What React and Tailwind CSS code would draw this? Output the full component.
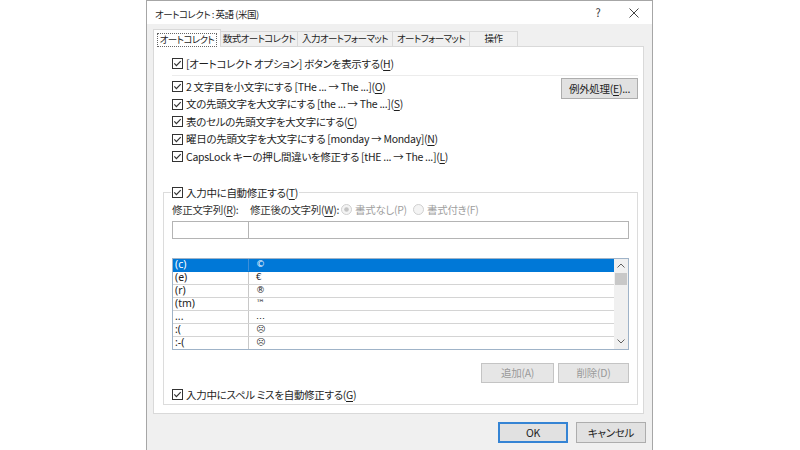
import React from "react";

const F = "font-['Noto_Sans_CJK_JP','Noto_Sans',sans-serif] [font-feature-settings:'palt']";

function Check({ checked = true }) {
  return (
    <svg width="11" height="11" viewBox="0 0 11 11" className="shrink-0">
      <rect x="0.5" y="0.5" width="10" height="10" fill="white" stroke="#333" />
      {checked && <path d="M2.3 5.4 L4.4 7.6 L8.7 3.1" fill="none" stroke="#333" strokeWidth="1.2" />}
    </svg>
  );
}

function Radio({ on }) {
  return (
    <svg width="11" height="11" viewBox="0 0 11 11" className="shrink-0">
      <circle cx="5.5" cy="5.5" r="5" fill="#f4f4f4" stroke="#cfcfcf" />
      {on && <circle cx="5.5" cy="5.5" r="2.3" fill="#c4c4c4" />}
    </svg>
  );
}

function Row({ children }) {
  return (
    <div className="h-[17.5px] flex items-center gap-[3px] whitespace-nowrap">
      <Check />
      <span>{children}</span>
    </div>
  );
}

const U = ({ children }) => <span className="underline underline-offset-2">{children}</span>;

const rows = [
  ["(c)", "©"],
  ["(e)", "€"],
  ["(r)", "®"],
  ["(tm)", "™"],
  ["...", "…"],
  [":(", "☹"],
  [":-(", "☹"],
];

const tabs = [
  { t: "オートコレクト", w: "w-[68px]", sel: true },
  { t: "数式オートコレクト", w: "w-[77px]" },
  { t: "入力オートフォーマット", w: "w-[95px]" },
  { t: "オートフォーマット", w: "w-[77px]" },
  { t: "操作", w: "w-[48px]" },
];

export default function App() {
  return (
    <div className={`w-[800px] h-[450px] bg-white overflow-hidden text-[10.5px] tracking-[-0.3px] text-[#1e1e1e] ${F}`}>
      <div className="ml-[146px] w-[507px] h-[452px] border border-[#a6a6a6] bg-[#f0f0f0] flex flex-col">
        {/* title bar */}
        <div className="h-[23px] bg-white flex items-center shrink-0">
          <span className="pl-[8px] pt-[3px] text-[9.5px] tracking-[-0.5px] whitespace-nowrap">オートコレクト : 英語 (米国)</span>
          <div className="ml-auto flex h-full">
            <div className="w-[36px] flex items-center justify-center text-[11px] text-[#333]">?</div>
            <div className="w-[36px] flex items-center justify-center">
              <svg width="10" height="10" viewBox="0 0 10 10">
                <path d="M0.5 0.5 L9.5 9.5 M9.5 0.5 L0.5 9.5" stroke="#444" strokeWidth="1" />
              </svg>
            </div>
          </div>
        </div>

        {/* tabs */}
        <div className="mt-[5px] ml-[6px] h-[18px] flex items-end relative z-10 shrink-0 text-[9.5px] tracking-[-0.6px]">
          {tabs.map((tb, i) =>
            tb.sel ? (
              <div key={i} className={`${tb.w} h-[18px] bg-white border border-b-0 border-[#d9d9d9] flex items-center justify-center px-[3px] pt-[2px]`}>
                <span className="border border-dotted border-[#666] w-full h-[14px] flex items-center justify-center leading-none whitespace-nowrap">{tb.t}</span>
              </div>
            ) : (
              <div key={i} className={`${tb.w} h-[15px] mb-[1px] border-t border-r border-[#d9d9d9] flex items-center justify-center leading-none whitespace-nowrap`}>
                {tb.t}
              </div>
            )
          )}
        </div>

        {/* panel */}
        <div className="-mt-[1px] ml-[6px] w-[491px] h-[368px] bg-white border border-[#d9d9d9] flex flex-col shrink-0">
          <div className="pt-[8px] pl-[18px]">
            <div className="h-[17px] flex items-center gap-[3px] whitespace-nowrap">
              <Check />
              <span>[オートコレクト オプション] ボタンを表示する(<U>H</U>)</span>
            </div>
          </div>
          <div className="mt-[3px] ml-[18px] mr-[5px] h-px bg-[#ececec]" />
          <div className="mt-[2px] flex">
            <div className="pl-[18px] flex flex-col">
              <Row>2 文字目を小文字にする [THe ... → The ...](<U>O</U>)</Row>
              <Row>文の先頭文字を大文字にする [the ... → The ...](<U>S</U>)</Row>
              <Row>表のセルの先頭文字を大文字にする(<U>C</U>)</Row>
              <Row>曜日の先頭文字を大文字にする [monday →  Monday](<U>N</U>)</Row>
              <Row>CapsLock キーの押し間違いを修正する [tHE ... → The ...](<U>L</U>)</Row>
            </div>
            <div className="ml-auto mr-[5px] w-[77px] h-[21px] bg-[#e1e1e1] border border-[#adadad] flex items-center justify-center whitespace-nowrap">
              例外処理(<U>E</U>)...
            </div>
          </div>

          {/* group box */}
          <fieldset className="mt-[19px] ml-[9px] mr-[5px] border border-[#dcdcdc] px-[8px] pb-[1px]">
            <legend className="-ml-[1px] px-[1px] h-[16px]">
              <div className="h-[16px] flex items-center gap-[3px] whitespace-nowrap">
                <Check />
                <span>入力中に自動修正する(<U>T</U>)</span>
              </div>
            </legend>
            <div className="mt-[1px] h-[16px] flex items-center whitespace-nowrap text-[#333]">
              <span className="w-[78px]">修正文字列(<U>R</U>):</span>
              <span className="w-[91px]">修正後の文字列(<U>W</U>):</span>
              <span className="w-[72px] flex items-center gap-[3px] text-[#a0a0a0]">
                <Radio on />
                書式なし(P)
              </span>
              <span className="flex items-center gap-[3px] text-[#a0a0a0]">
                <Radio />
                書式付き(F)
              </span>
            </div>
            <div className="mt-[3px] h-[18px] flex border border-[#b4b4b4]">
              <div className="w-[76px] border-r border-[#b4b4b4]" />
              <div className="flex-1" />
            </div>
            <div className="mt-[19px] h-[92px] flex border border-[#9fb3c8] bg-white tracking-normal">
              <div className="flex-1 flex flex-col">
                {rows.map(([a, b], i) => (
                  <div
                    key={i}
                    className={`${i === rows.length - 1 ? "h-[12px]" : "h-[13px] border-b"} shrink-0 flex items-center ${i === 0 ? "bg-[#0078d7] text-white border-[#0078d7]" : "border-[#d4d4d4] text-[#222]"} text-[10.5px] leading-[11px]`}
                  >
                    <div className={`w-[76px] h-full border-r ${i === 0 ? "border-[#3d8fd9]" : "border-[#c8c8c8]"} pl-[2px] flex items-center font-['Noto_Sans',sans-serif]`}>{a}</div>
                    <div className="flex-1 h-full pl-[7px] flex items-center font-['DejaVu_Sans',sans-serif] text-[9px]">
                      <span className={i >= 5 ? "text-[#333]" : ""}>{b}</span>
                    </div>
                  </div>
                ))}
              </div>
              <div className="w-[14px] bg-[#f0f0f0] flex flex-col">
                <div className="h-[14px] flex items-center justify-center">
                  <svg width="8" height="5" viewBox="0 0 8 5">
                    <path d="M0.5 4.5 L4 1 L7.5 4.5" fill="none" stroke="#606060" strokeWidth="1" />
                  </svg>
                </div>
                <div className="h-[12px] mx-[1px] bg-[#c8c8c8]" />
                <div className="flex-1" />
                <div className="h-[14px] flex items-center justify-center">
                  <svg width="8" height="5" viewBox="0 0 8 5">
                    <path d="M0.5 0.5 L4 4 L7.5 0.5" fill="none" stroke="#606060" strokeWidth="1" />
                  </svg>
                </div>
              </div>
            </div>
            <div className="mt-[13px] flex justify-end gap-[4px]">
              <div className="w-[73px] h-[20px] bg-[#e6e6e6] border border-[#c4c4c4] flex items-center justify-center text-[#9a9a9a]">追加(A)</div>
              <div className="w-[71px] h-[20px] bg-[#e6e6e6] border border-[#c4c4c4] flex items-center justify-center text-[#9a9a9a]">削除(D)</div>
            </div>
            <div className="mt-[4px] h-[16px] flex items-center gap-[3px] whitespace-nowrap">
              <Check />
              <span>入力中にスペル ミスを自動修正する(<U>G</U>)</span>
            </div>
          </fieldset>
        </div>

        {/* footer */}
        <div className="mt-[8px] pr-[6px] flex justify-end gap-[8px]">
          <div className="w-[70px] h-[21px] bg-[#e1e1e1] border-2 border-[#3584d4] flex items-center justify-center">OK</div>
          <div className="w-[70px] h-[21px] bg-[#e1e1e1] border border-[#adadad] flex items-center justify-center">キャンセル</div>
        </div>
      </div>
    </div>
  );
}
